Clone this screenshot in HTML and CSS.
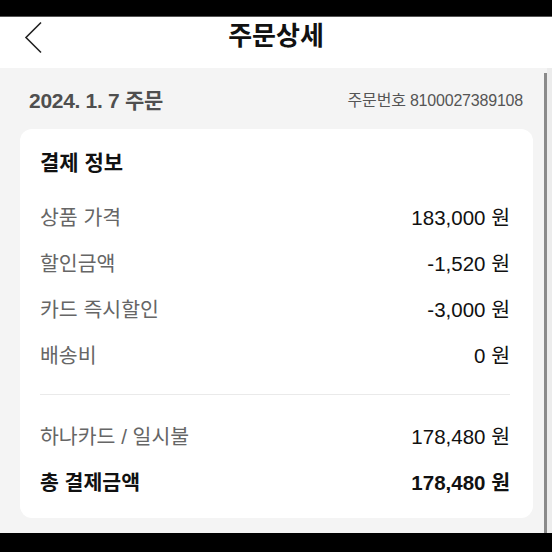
FILE: index.html
```html
<!DOCTYPE html>
<html lang="ko">
<head>
<meta charset="utf-8">
<title>주문상세</title>
<link rel="stylesheet" href="styles.css">
</head>
<body>
<div class="screen">
  <div class="statusbar"></div>
  <header class="header">
    <button class="back" aria-label="뒤로">
      <svg width="20" height="34" viewBox="0 0 20 34"><path d="M17 1.5 L2 16.5 L17 31.5" fill="none" stroke="#222" stroke-width="1.6"/></svg>
    </button>
    <h1 class="title">주문상세</h1>
  </header>
  <main class="main">
    <div class="content">
      <div class="order-head">
        <span class="order-date">2024. 1. 7 주문</span>
        <span class="order-no">주문번호 8100027389108</span>
      </div>
      <section class="card">
        <h2 class="card-title">결제 정보</h2>
        <div class="row"><span class="label">상품 가격</span><span class="value">183,000 원</span></div>
        <div class="row"><span class="label">할인금액</span><span class="value">-1,520 원</span></div>
        <div class="row"><span class="label">카드 즉시할인</span><span class="value">-3,000 원</span></div>
        <div class="row"><span class="label">배송비</span><span class="value">0 원</span></div>
        <hr class="divider">
        <div class="row"><span class="label">하나카드 / 일시불</span><span class="value">178,480 원</span></div>
        <div class="row total"><span class="label">총 결제금액</span><span class="value">178,480 원</span></div>
      </section>
    </div>
    <div class="scrolltrack"><div class="thumb"></div></div>
  </main>
  <div class="bottombar"></div>
</div>
</body>
</html>
```

FILE: styles.css
```css
* { box-sizing: border-box; }
html, body { margin: 0; padding: 0; }
body {
  width: 552px;
  height: 552px;
  overflow: hidden;
  font-family: "Liberation Sans", "Noto Sans CJK KR", sans-serif;
  background: #000;
}
.screen {
  width: 552px;
  height: 552px;
  display: flex;
  flex-direction: column;
}
.statusbar {
  height: 17px;
  background: #000;
  border-bottom: 1px solid #555;
}
.header {
  height: 51px;
  background: #fff;
  display: flex;
  align-items: flex-start;
  justify-content: center;
  position: relative;
}
.back {
  position: absolute;
  left: 24px;
  top: 4px;
  padding: 0;
  border: 0;
  background: none;
  line-height: 0;
}
.title {
  margin: 0;
  padding-top: 4px;
  font-size: 26px;
  line-height: 30px;
  font-weight: 700;
  color: #111;
}
.main {
  flex: 1;
  display: flex;
  background: #f4f4f4;
}
.content {
  flex: 1;
  padding: 17px 11px 0 20px;
}
.order-head {
  display: flex;
  justify-content: space-between;
  align-items: center;
  height: 28px;
  padding: 0 10px 0 9px;
}
.order-date {
  font-size: 21px;
  font-weight: 700;
  color: #4f4f4f;
  letter-spacing: -0.3px;
}
.order-no {
  font-size: 16px;
  color: #555;
  letter-spacing: -0.2px;
}
.card {
  margin-top: 16px;
  background: #fff;
  border-radius: 12px;
  padding: 20px 23px 14px 20px;
}
.card-title {
  margin: 0 0 16px;
  font-size: 21px;
  line-height: 28px;
  font-weight: 700;
  color: #111;
}
.row {
  display: flex;
  justify-content: space-between;
  align-items: center;
  height: 46px;
  font-size: 20.5px;
}
.label { color: #666; }
.value { color: #111; }
.total .label, .total .value { color: #111; font-weight: 700; }
.divider {
  border: 0;
  border-top: 1px solid #eaeaea;
  margin: 17px 0 17px;
}
.scrolltrack {
  width: 8px;
  padding-top: 5px;
  background: #f4f4f4;
  display: flex;
}
.thumb {
  width: 3px;
  background: #8a8a8a;
}
.scrolltrack::after {
  content: "";
  flex: 1;
  background: #ececec;
  margin-top: -5px;
}
.bottombar {
  height: 19px;
  background: #000;
}
```
